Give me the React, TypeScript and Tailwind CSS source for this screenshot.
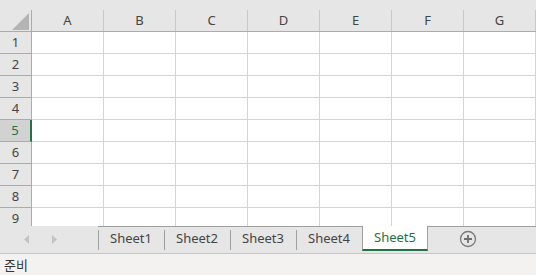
const columns = ["A", "B", "C", "D", "E", "F", "G"];
const rows = [1, 2, 3, 4, 5, 6, 7, 8, 9];
const sheets = ["Sheet1", "Sheet2", "Sheet3", "Sheet4", "Sheet5"];
const activeRow = 5;
const activeSheet = "Sheet5";

const App = () => {
  return (
    <div
      className="w-[536px] h-[275px] overflow-hidden bg-white flex flex-col text-[13px] text-[#444]"
      style={{ fontFamily: '"Noto Sans", "Noto Sans CJK KR", sans-serif' }}
    >
      {/* GRID */}
      <div className="h-[226px] overflow-hidden flex flex-col shrink-0">
        <div className="h-[10px] bg-[#e6e6e6] shrink-0"></div>
        {/* column headers */}
        <div className="flex h-[22px] shrink-0 bg-[#e6e6e6] border-b border-b-[#ababab]">
          <div className="w-[32px] shrink-0 border-r border-r-[#ababab] relative">
            <svg width="17" height="17" className="absolute right-[2px] bottom-[1px]">
              <polygon points="17,0 17,17 0,17" fill="#b4b4b4" />
            </svg>
          </div>
          {columns.map((col) => (
            <div
              key={col}
              className="w-[72px] shrink-0 border-r border-r-[#c8c8c8] flex items-center justify-center leading-none"
            >
              {col}
            </div>
          ))}
        </div>
        {/* rows */}
        {rows.map((row) => (
          <div key={row} className="flex h-[22px] shrink-0 border-b border-b-[#d4d4d4]">
            <div
              className={
                row === activeRow
                  ? "w-[32px] shrink-0 bg-[#d2d2d2] border-r-2 border-r-[#217346] border-b border-b-[#ababab] -mb-px flex items-center justify-center text-[#217346] leading-none"
                  : "w-[32px] shrink-0 bg-[#e6e6e6] border-r border-r-[#ababab] border-b border-b-[#ababab] -mb-px flex items-center justify-center leading-none"
              }
            >
              {row}
            </div>
            {columns.map((col) => (
              <div key={col} className="w-[72px] shrink-0 border-r border-r-[#d4d4d4]"></div>
            ))}
          </div>
        ))}
      </div>

      {/* SHEET TABS */}
      <div className="h-[28px] shrink-0 flex bg-[#e6e6e6] border-b border-b-[#c6c6c6]">
        <div className="w-[98px] shrink-0 flex items-center">
          <svg width="6" height="9" className="ml-[24px]">
            <polygon points="5,0 5,9 0,4.5" fill="#c3c3c3" />
          </svg>
          <svg width="6" height="9" className="ml-[22px]">
            <polygon points="0,0 0,9 5,4.5" fill="#c3c3c3" />
          </svg>
        </div>
        {sheets.map((sheet) =>
          sheet === activeSheet ? (
            <div
              key={sheet}
              className="w-[66px] shrink-0 h-[25px] bg-white border-x border-x-[#a0a0a0] border-b-2 border-b-[#217346] flex items-center justify-center text-[#217346]"
            >
              {sheet}
            </div>
          ) : (
            <div
              key={sheet}
              className="w-[66px] shrink-0 border-t border-t-[#a0a0a0] flex items-center relative"
            >
              <div className="absolute left-0 top-[3px] h-[20px] w-px bg-[#a0a0a0]"></div>
              <span className="w-full text-center pb-[2px]">{sheet}</span>
            </div>
          )
        )}
        <div className="flex-1 border-t border-t-[#a0a0a0] flex items-center">
          <svg width="18" height="18" viewBox="0 0 18 18" className="ml-[31px] mb-[2px]">
            <circle cx="9" cy="9" r="7.5" fill="none" stroke="#7a7a7a" strokeWidth="1.3" />
            <path d="M9 5v8M5 9h8" stroke="#6e6e6e" strokeWidth="1.8" />
          </svg>
        </div>
      </div>

      {/* STATUS BAR */}
      <div className="flex-1 bg-[#f3f2f1] flex items-center pl-[4px] text-[#333]">
        <span style={{ fontFamily: '"Noto Sans CJK KR", sans-serif' }}>준비</span>
      </div>
    </div>
  );
};

export default App;
